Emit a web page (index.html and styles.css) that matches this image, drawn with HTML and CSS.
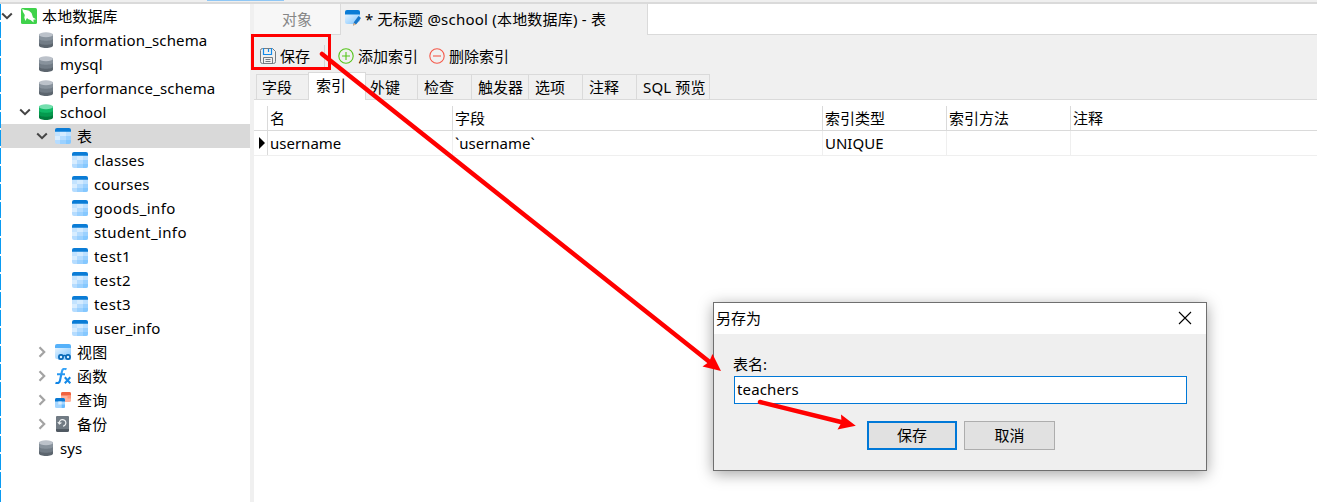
FILE: index.html
```html
<!DOCTYPE html>
<html lang="zh-CN">
<head>
<meta charset="utf-8">
<title>school</title>
<link rel="stylesheet" href="styles.css">
</head>
<body>
<svg class="defs" width="0" height="0" aria-hidden="true">
  <defs>
    <linearGradient id="sky" x1="0" y1="0" x2="1" y2="1"><stop offset="0" stop-color="#e4f3ff"/><stop offset="1" stop-color="#7cc4ff"/></linearGradient>
    <linearGradient id="fx" x1="0" y1="0" x2="0" y2="1"><stop offset="0" stop-color="#37a4f8"/><stop offset="1" stop-color="#0f84e6"/></linearGradient>
    <symbol id="down" viewBox="0 0 12 8"><path d="M1.2 1.500 6 6.200l4.800-4.700" fill="none" stroke="#444" stroke-width="2"/></symbol>
    <symbol id="right" viewBox="0 0 8 12"><path d="M1.500 1.200 6.200 6l-4.700 4.800" fill="none" stroke="#a3a3a3" stroke-width="2.200"/></symbol>
    <symbol id="db" viewBox="0 0 16 16">
      <path d="M1 2.500v11C1 15 4 16 8 16s7-1 7-2.500v-11z" fill="#5c656e"/>
      <path d="M1 2.500v8C1 12 4 12.700 8 12.700s7-.7 7-2.200v-8z" fill="#727c86"/>
      <path d="M1 2.500v4C1 8 4 8.700 8 8.700s7-.7 7-2.200v-4z" fill="#88929c"/>
      <ellipse cx="8" cy="2.700" rx="7" ry="2.500" fill="#bcc2ca"/>
    </symbol>
    <symbol id="dbon" viewBox="0 0 16 16">
      <path d="M1 2.500v11C1 15 4 16 8 16s7-1 7-2.500v-11z" fill="#027c3d"/>
      <path d="M1 2.500v8C1 12 4 12.700 8 12.700s7-.7 7-2.200v-8z" fill="#059a4e"/>
      <path d="M1 2.500v4C1 8 4 8.700 8 8.700s7-.7 7-2.200v-4z" fill="#10b866"/>
      <ellipse cx="8" cy="2.700" rx="7" ry="2.500" fill="#74dfae"/>
    </symbol>
    <symbol id="table" viewBox="0 0 16 16">
      <path d="M0 3h16v11a2 2 0 0 1-2 2H2a2 2 0 0 1-2-2z" fill="#b5dcff"/>
      <path d="M0 3h5v5H0z" fill="#c3e3ff"/><path d="M5 3h6v5H5z" fill="#d4ebff"/><path d="M11 3h5v5h-5z" fill="#bde0ff"/>
      <path d="M5 8h6v4H5z" fill="#b5dcff"/><path d="M0 8h5v4H0z" fill="#d8edff"/><path d="M11 8h5v4h-5z" fill="#9bd1ff"/>
      <path d="M11 12h5v2a2 2 0 0 1-2 2h-3z" fill="#85c8ff"/><path d="M5 12h6v4H5z" fill="#9bd1ff"/>
      <path d="M0 3.700V2a2 2 0 0 1 2-2h12a2 2 0 0 1 2 2v1.700z" fill="#0a7cd6"/>
    </symbol>
    <symbol id="view" viewBox="0 0 16 16">
      <path d="M0 4h16v11H2a2 2 0 0 1-2-2z" fill="url(#sky)"/>
      <path d="M0 4V2a2 2 0 0 1 2-2h12a2 2 0 0 1 2 2v2z" fill="#55b1fa"/>
      <path d="M3 10h13v6H3z" fill="#a7d7ff"/>
      <circle cx="6" cy="13" r="2.100" fill="#d9efff" stroke="#0668b7" stroke-width="1.700"/><circle cx="13" cy="13" r="2.100" fill="#d9efff" stroke="#0668b7" stroke-width="1.700"/><path d="M8 12q1.500-1 3 0" fill="none" stroke="#0668b7" stroke-width="1.500"/>
    </symbol>
    <symbol id="func" viewBox="0 0 16 16">
      <path d="M11.500 1.300C8.500-.2 7.300 1.500 6.800 4L5 12.500Q4.300 16 .5 14.700M2 6.200h8" fill="none" stroke="url(#fx)" stroke-width="2.100"/>
      <path d="m9.800 9.300 5.500 6m0-6-5.500 6" fill="none" stroke="#168be9" stroke-width="2.100"/>
    </symbol>
    <symbol id="query" viewBox="0 0 16 16">
      <rect x="6" y="0" width="10" height="10" rx="1.500" fill="#ffb29c"/><path d="M6 3.500V1.500Q6 0 7.500 0h7Q16 0 16 1.500v2z" fill="#f0633f"/><path d="M12.500 3.500H16v3h-3.500z" fill="#ff9475"/>
      <rect x="0" y="6" width="10" height="10" rx="1.500" fill="#a5d6ff"/><path d="M0 9.500v-2Q0 6 1.500 6h7Q10 6 10 7.500v2z" fill="#0878d2"/><path d="M3.300 9.500h3.400v3H3.300z" fill="#d8edff"/><path d="M6.700 12.500H10v2Q10 16 8.500 16H6.700z" fill="#6bbcff"/>
    </symbol>
    <symbol id="backup" viewBox="0 0 16 16">
      <rect x="1" y="0" width="13" height="16" rx="1.500" fill="#505962"/><path d="M1 1.500Q1 0 2.500 0h10Q14 0 14 1.500V13H1z" fill="#717b84"/>
      <path d="M4.300 7.500A3.300 3.300 0 1 1 8 10.200M2.800 6l1.600 2 2-1.500" fill="none" stroke="#eef1f3" stroke-width="1.200"/>
    </symbol>
  </defs>
</svg>

<div class="topstrip"><span class="topmark"></span></div>
<div class="app">
  <nav class="tree">
    <div class="row l0"><svg class="arr"><use href="#down"/></svg><svg class="ico" viewBox="0 0 16 16"><rect width="16" height="16" rx="1.500" fill="#3fd24b"/><path d="M1.200 1 4 2Q8 1.500 10.500 5L12 9.500l3 1.800-2.600.4.200 2.800-3-2.500Q7 11.500 6 10L4.300 13 3.300 9.500 3.800 7 2 4z" fill="#fff"/></svg><span>本地数据库</span></div>
    <div class="row l1"><svg class="ico"><use href="#db"/></svg><span>information_schema</span></div>
    <div class="row l1"><svg class="ico"><use href="#db"/></svg><span>mysql</span></div>
    <div class="row l1"><svg class="ico"><use href="#db"/></svg><span>performance_schema</span></div>
    <div class="row l1 open"><svg class="arr"><use href="#down"/></svg><svg class="ico"><use href="#dbon"/></svg><span>school</span></div>
    <div class="row l2 open selected"><svg class="arr"><use href="#down"/></svg><svg class="ico"><use href="#table"/></svg><span>表</span></div>
    <div class="row l3"><svg class="ico"><use href="#table"/></svg><span>classes</span></div>
    <div class="row l3"><svg class="ico"><use href="#table"/></svg><span>courses</span></div>
    <div class="row l3"><svg class="ico"><use href="#table"/></svg><span class="wide">goods_info</span></div>
    <div class="row l3"><svg class="ico"><use href="#table"/></svg><span class="wide">student_info</span></div>
    <div class="row l3"><svg class="ico"><use href="#table"/></svg><span class="wide">test1</span></div>
    <div class="row l3"><svg class="ico"><use href="#table"/></svg><span class="wide">test2</span></div>
    <div class="row l3"><svg class="ico"><use href="#table"/></svg><span class="wide">test3</span></div>
    <div class="row l3"><svg class="ico"><use href="#table"/></svg><span>user_info</span></div>
    <div class="row l2 open"><svg class="arr side"><use href="#right"/></svg><svg class="ico"><use href="#view"/></svg><span>视图</span></div>
    <div class="row l2 open"><svg class="arr side"><use href="#right"/></svg><svg class="ico"><use href="#func"/></svg><span>函数</span></div>
    <div class="row l2 open"><svg class="arr side"><use href="#right"/></svg><svg class="ico"><use href="#query"/></svg><span>查询</span></div>
    <div class="row l2 open"><svg class="arr side"><use href="#right"/></svg><svg class="ico"><use href="#backup"/></svg><span>备份</span></div>
    <div class="row l1"><svg class="ico"><use href="#db"/></svg><span>sys</span></div>
  </nav>

  <main class="main">
    <div class="tabs">
      <div class="tab objects">对象</div>
      <div class="tab current"><svg class="ico" viewBox="0 0 16 16"><path d="M0 4h15v7l-5 3H2a2 2 0 0 1-2-2z" fill="url(#sky)"/><path d="M0 4.500V2a2 2 0 0 1 2-2h11a2 2 0 0 1 2 2v2.500z" fill="#0a7cd6"/><path d="m8 15.500 1-3.500 4.500-6 2.500 2-4.500 6z" fill="#1876c8"/><path d="m8 15.800.8-3 2.400 1.800z" fill="#e9b483"/></svg><span>* 无标题 @school (本地数据库) - 表</span></div>
      <div class="tabfill"></div>
    </div>
    <div class="toolbar">
      <svg class="ico save" viewBox="0 0 16 16" fill="none"><path d="M2.500.5h10l3 3v10a2 2 0 0 1-2 2h-11a2 2 0 0 1-2-2v-11a2 2 0 0 1 2-2z" stroke="#737b82"/><path d="M3.500 0v6.500h8V0M8.500 1v3" stroke="#128bea" stroke-width="1.200"/><path d="M3.500 15.500v-6h9v6M5.500 11.500h5m-5 2h5" stroke="#737b82"/></svg>
      <span class="t-save">保存</span><i class="sep"></i>
      <svg class="round" viewBox="0 0 16 16" fill="none" stroke="#55c51a" stroke-width="1.100"><circle cx="8" cy="8" r="7.200"/><path d="M4 8h8M8 4v8"/></svg>
      <span class="t-add">添加索引</span>
      <svg class="round" viewBox="0 0 16 16" fill="none" stroke="#f5594a" stroke-width="1.100"><circle cx="8" cy="8" r="7.200"/><path d="M4 8h8"/></svg>
      <span class="t-del">删除索引</span>
    </div>
    <div class="subtabs">
      <div class="sub w1">字段</div><div class="sub on">索引</div><div class="sub w3">外键</div><div class="sub w4">检查</div><div class="sub w5">触发器</div><div class="sub w6">选项</div><div class="sub w7">注释</div><div class="sub w8">SQL 预览</div><div class="subfill"></div>
    </div>
    <div class="grid">
      <div class="gr head"><b></b><div>名</div><div>字段</div><div>索引类型</div><div>索引方法</div><div>注释</div></div>
      <div class="gr data"><b><svg width="6" height="12" viewBox="0 0 6 12"><path d="M0 0v12l6-6z"/></svg></b><div>username</div><div>`username`</div><div>UNIQUE</div><div></div><div></div></div>
    </div>
  </main>
</div>

<section class="dialog">
  <header class="dtitle"><span>另存为</span><svg width="14" height="14" viewBox="0 0 14 14"><path d="m1 1 12 12M13 1 1 13" stroke="#000" stroke-width="1.100"/></svg></header>
  <div class="dbody">
    <div class="dlabel">表名:</div>
    <div class="dinput">teachers</div>
    <div class="dbuttons"><div class="btn primary">保存</div><div class="btn">取消</div></div>
  </div>
</section>

<svg class="marks" width="1317" height="502" viewBox="0 0 1317 502">
  <rect x="252.500" y="35.500" width="77" height="33" fill="none" stroke="#f00" stroke-width="3"/>
  <g stroke="#f00" stroke-width="4.500" stroke-linecap="round"><path d="M322 54 709 361.500M760 402l83 20.500"/></g>
  <path d="M721 371 702.500 366.500 709 362 712.500 354z" fill="#f00"/>
  <path d="M855.800 425.800 837.500 429.500 841.500 422.500 841 414.500z" fill="#f00"/>
</svg>
</body>
</html>
```

FILE: styles.css
```css
* { box-sizing: border-box; }
body {
  margin: 0;
  width: 1317px;
  height: 502px;
  overflow: hidden;
  background: #f0f0f0;
  color: #000;
  font: 15px/24px "Noto Sans", "Noto Sans CJK SC", sans-serif;
  white-space: nowrap;
}
.defs { position: absolute; }
svg { display: block; flex: none; }
.topstrip { height: 4px; background: #efefef; border-bottom: 2px solid #dadada; display: flex; }
.topmark { width: 77px; height: 1px; margin-left: 207px; background: #8fc7f5; }
.app { display: flex; height: 498px; }
.tree {
  width: 250px;
  margin-right: 4px;
  background: repeating-linear-gradient(#0a9bf2 0 16px, #fff 16px 18px) 0 0 / 1px 100% no-repeat, #fff;
}
.row { display: flex; align-items: center; height: 24px; margin-left: 1px; }
.row span { letter-spacing: .14px; }
.row .wide { letter-spacing: .38px; }
.ico { width: 16px; height: 16px; margin-right: 6px; }
.arr { width: 12px; height: 8px; margin-right: 7px; }
.arr.side { width: 8px; height: 12px; margin: 0 9px 0 2px; }
.l0 { padding-left: 0; }
.l0 .arr { margin-right: 8px; }
.l0 .ico { margin-right: 5px; }
.l1 { padding-left: 37px; }
.l1.open { padding-left: 18px; }
.l2.open { padding-left: 35px; }
.l3 { padding-left: 71px; }
.selected { background: #d9d9d9; }
.main { flex: 1; display: flex; flex-direction: column; min-width: 0; }
.tabs { display: flex; height: 31px; }
.objects { width: 87px; padding: 3px 0 0 28px; color: #868686; background: #f7f7f7; border: solid #dadada; border-width: 0 1px 1px 0; }
.current { width: 306px; padding-left: 4px; display: flex; }
.current .ico { margin: 6px 4px 0 0; }
.current span { padding-top: 3px; letter-spacing: .22px; }
.tabfill { flex: 1; background: #fff; border: solid #dadada; border-width: 0 0 1px 1px; }
.toolbar { display: flex; align-items: center; height: 37px; padding: 5px 0 0 6px; }
.save { margin-right: 4px; }
.t-save { width: 44px; }
.sep { width: 1px; height: 22px; margin-right: 13px; background: #d4d4d4; }
.round { width: 16px; height: 16px; margin-right: 4px; }
.t-add { width: 71px; }
.subtabs { display: flex; align-items: flex-end; height: 28px; }
.subtabs::before { content: ""; width: 2px; border-bottom: 1px solid #dadada; }
.sub { height: 26px; padding: 0 0 0 5px; border: solid #dadada; border-width: 1px 0 1px 1px; line-height: 24px; }
.sub.on { width: 58px; height: 28px; padding-left: 7px; background: #fff; border-right-width: 1px; border-bottom: 0; }
.w1 { width: 52px; }
.w3 { width: 51px; padding-left: 4px; border-left: 0; }
.w4 { width: 54px; padding-left: 6px; }
.w5 { width: 57px; padding-left: 6px; }
.w6 { width: 54px; padding-left: 6px; }
.w7 { width: 54px; padding-left: 6px; }
.w8 { width: 74px; padding-left: 6px; border-right-width: 1px; letter-spacing: .15px; }
.subfill { flex: 1; border-bottom: 1px solid #dadada; }
.grid { flex: 1; background: #fff; }
.gr { display: grid; grid-template-columns: 13px 185px 370px 124px 124px 1fr; }
.gr > div { padding-left: 2px; border-left: 1px solid #dadada; }
.head { height: 31px; padding-top: 6px; border-bottom: 1px solid #dadada; }
.data { height: 25px; border-bottom: 1px solid #efefef; }
.data > div { border-color: #efefef; }
.data > div:nth-child(2) { border-color: #dadada; }
.data b { padding: 6px 0 0 5px; }
.dialog {
  position: absolute;
  left: 713px;
  top: 302px;
  width: 494px;
  height: 169px;
  border: 1px solid #6f6f6f;
  background: #efefef;
  box-shadow: 0 3px 14px rgba(0, 0, 0, .36);
}
.dtitle { display: flex; justify-content: space-between; height: 31px; padding: 3px 14px 0 2px; background: #fff; }
.dtitle svg { margin-top: 5px; }
.dbody { padding: 18px 19px 0 20px; }
.dlabel { height: 24px; margin-left: -1px; }
.dinput { height: 28px; padding-left: 2px; border: 1px solid #0078d7; background: #fff; line-height: 24px; letter-spacing: .15px; }
.dbuttons { display: flex; gap: 7px; margin: 17px 0 0 133px; }
.btn { width: 91px; height: 29px; border: 1px solid #adadad; background: #e1e1e1; text-align: center; line-height: 26px; }
.primary { width: 90px; border: 2px solid #0078d7; line-height: 24px; }
.marks { position: absolute; left: 0; top: 0; }
```
